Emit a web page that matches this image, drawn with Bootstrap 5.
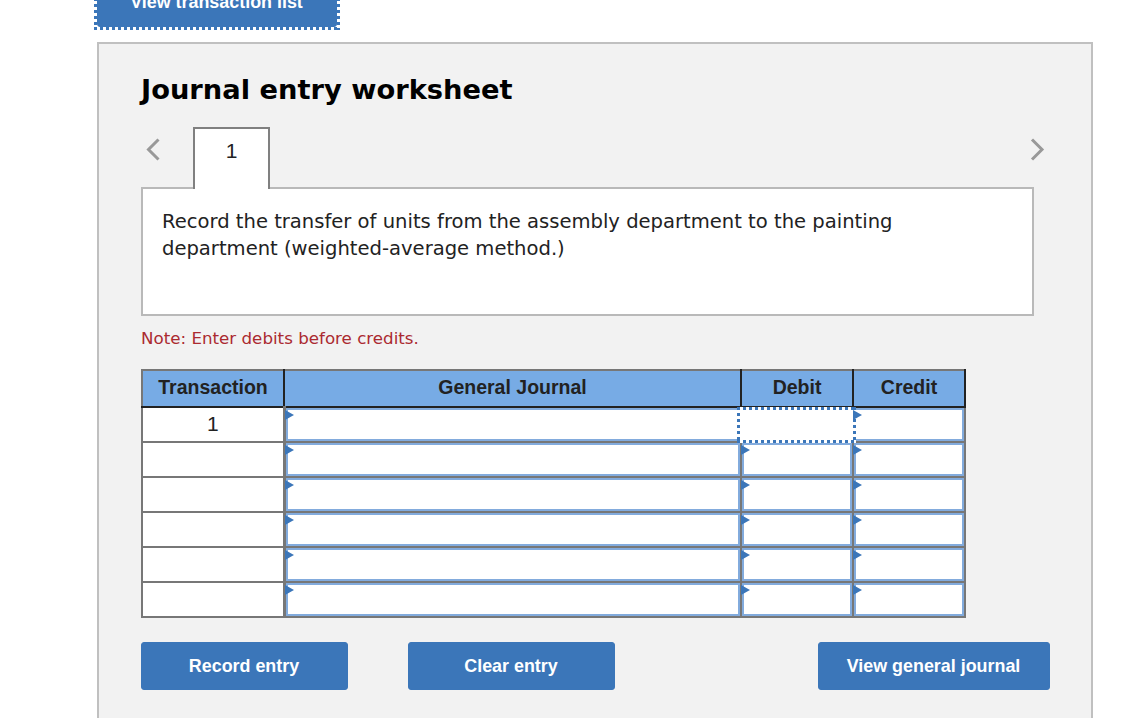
<!DOCTYPE html>
<html lang="en">
<head>
<meta charset="utf-8">
<title>Journal entry worksheet</title>
<link href="https://cdn.jsdelivr.net/npm/bootstrap@5.3.0/dist/css/bootstrap.min.css" rel="stylesheet">
<style>
html,body{height:718px;overflow:hidden;background:#fff;color:#212121;font-family:"Liberation Sans",Arial,sans-serif}
.stage{height:718px;overflow:hidden;padding-left:97px}
.btn-je{--bs-btn-bg:#3b76b9;--bs-btn-color:#fff;--bs-btn-border-color:#3b76b9;--bs-btn-hover-bg:#3b76b9;--bs-btn-hover-color:#fff;--bs-btn-border-radius:3px;font:700 17.9px/22px "Liberation Sans",Arial,sans-serif;height:48px;padding:0 1px 0 0;display:flex;align-items:center;justify-content:center}
.btn-top{width:240px;height:50px;margin-top:-23px;position:relative}
.dots-je::after{content:"";position:absolute;inset:-4px;pointer-events:none;background:
 repeating-linear-gradient(90deg,#3b76b9 0 3px,transparent 3px 6px) top/100% 3px no-repeat,
 repeating-linear-gradient(90deg,#3b76b9 0 3px,transparent 3px 6px) bottom/100% 3px no-repeat,
 repeating-linear-gradient(180deg,#3b76b9 0 3px,transparent 3px 6px) left/3px 100% no-repeat,
 repeating-linear-gradient(180deg,#3b76b9 0 3px,transparent 3px 6px) right/3px 100% no-repeat}
.panel-je{margin-top:15px;width:996px;height:700px;background:#f2f2f2;border:2px solid #c0c0c0;padding:0 40px 0 42px}
.title-je{font:700 27.3px/36px "DejaVu Sans",Verdana,sans-serif;color:#000;margin:0;padding-top:28px;height:67px}
.tab-row{height:62px;margin-top:16px;position:relative}
.tab-one{margin-left:52px;width:77px;height:62px;background:#fff;border:2px solid #808080;border-bottom:0;font-size:21px;line-height:44px;text-align:center;position:relative;z-index:1;color:#222}
.chev{width:16px;height:26px;fill:none;stroke:#999;stroke-width:3;position:absolute;top:9px}
.chev-l{left:3px}
.chev-r{left:888px}
.box-je{width:893px;height:129px;margin-top:-2px;background:#fff;border:2px solid #b9b9b9;padding:19px 19px;font:19.57px/27px "DejaVu Sans",Verdana,sans-serif;color:#222}
.note-je{font:16.7px/20px "DejaVu Sans",Verdana,sans-serif;color:#ab2a30;margin:12px 0 0;height:31px}
.tbl-je{border-collapse:collapse;table-layout:fixed;width:823px;margin-top:10px}
.tbl-je th{background:#77abe5;height:37px;padding:0 0 4px;font-size:19.5px;line-height:24px;font-weight:700;text-align:center;color:#222;border:0;border-right:2px solid #222;border-bottom:2px solid #222;border-top:2px solid #777}
.tbl-je th:first-child{border-left:2px solid #777}
.tbl-je td{height:35px;padding:0 0 2px;background:#fff;border:2px solid #777;text-align:center;font-size:21px;line-height:24px;color:#222}
.tbl-je tr td:first-child{border-right-width:3px}
.tbl-je td.entry{position:relative;padding:0}
.field-je{display:block;height:33px;background:#fff;border:2px solid #82abdd}
.field-je::before{content:"";position:absolute;left:-1px;top:2px;z-index:3;border-left:9px solid #3b76b9;border-top:5px solid transparent;border-bottom:5px solid transparent}
td.focus-cell .field-je{border-color:#fff;position:relative;z-index:2}
td.focus-cell .field-je::before{display:none}
td.focus-cell .field-je::after{inset:-3px -6px -4px -7px;background-color:#fff;z-index:-1}
.actions-je{margin-top:24px;width:909px}
.actions-je .btn-je{width:207px}
.actions-je .btn-view{width:232px;margin-left:203px}
.actions-je .btn-clear{margin-left:60px}
</style>
</head>
<body>
<div class="stage">
  <button type="button" class="btn btn-je btn-top dots-je">View transaction list</button>
  <div class="panel-je">
    <h2 class="title-je">Journal entry worksheet</h2>
    <div class="tab-row">
      <svg class="chev chev-l" viewBox="0 0 16 26"><path d="M14.5 3.5 4.5 13.5 14.5 23.5"/></svg>
      <div class="tab-one">1</div>
      <svg class="chev chev-r" viewBox="0 0 16 26"><path d="M3 3.5l10 10L3 23.5"/></svg>
    </div>
    <div class="box-je">Record the transfer of units from the assembly department to the painting department (weighted-average method.)</div>
    <p class="note-je">Note: Enter debits before credits.</p>
    <table class="tbl-je">
      <colgroup><col style="width:142px"><col style="width:457px"><col style="width:112px"><col style="width:112px"></colgroup>
      <thead><tr><th>Transaction</th><th>General Journal</th><th>Debit</th><th>Credit</th></tr></thead>
      <tbody>
        <tr><td>1</td><td class="entry"><span class="field-je"></span></td><td class="entry focus-cell"><span class="field-je dots-je"></span></td><td class="entry"><span class="field-je"></span></td></tr>
        <tr><td></td><td class="entry"><span class="field-je"></span></td><td class="entry"><span class="field-je"></span></td><td class="entry"><span class="field-je"></span></td></tr>
        <tr><td></td><td class="entry"><span class="field-je"></span></td><td class="entry"><span class="field-je"></span></td><td class="entry"><span class="field-je"></span></td></tr>
        <tr><td></td><td class="entry"><span class="field-je"></span></td><td class="entry"><span class="field-je"></span></td><td class="entry"><span class="field-je"></span></td></tr>
        <tr><td></td><td class="entry"><span class="field-je"></span></td><td class="entry"><span class="field-je"></span></td><td class="entry"><span class="field-je"></span></td></tr>
        <tr><td></td><td class="entry"><span class="field-je"></span></td><td class="entry"><span class="field-je"></span></td><td class="entry"><span class="field-je"></span></td></tr>
      </tbody>
    </table>
    <div class="actions-je d-flex">
      <button type="button" class="btn btn-je">Record entry</button>
      <button type="button" class="btn btn-je btn-clear">Clear entry</button>
      <button type="button" class="btn btn-je btn-view">View general journal</button>
    </div>
  </div>
</div>
<script src="https://cdn.jsdelivr.net/npm/bootstrap@5.3.0/dist/js/bootstrap.bundle.min.js"></script>
</body>
</html>
